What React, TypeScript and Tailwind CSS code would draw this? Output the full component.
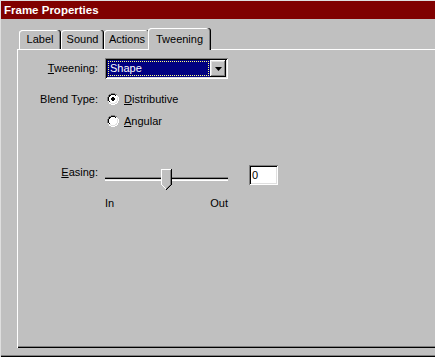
const raised =
  'shadow-[inset_-1px_-1px_#000,inset_1px_1px_#fff,inset_-2px_-2px_#808080,inset_2px_2px_#dfdfdf]';
const sunken =
  'shadow-[inset_1px_1px_#808080,inset_-1px_-1px_#fff,inset_2px_2px_#000,inset_-2px_-2px_#dfdfdf]';

function Mn({ children }: { children: string }) {
  return <span className="underline underline-offset-[1px]">{children}</span>;
}

function Radio({ checked }: { checked?: boolean }) {
  return (
    <svg width="12" height="12" viewBox="0 0 12 12" shapeRendering="crispEdges" className="shrink-0">
      <circle cx="6" cy="6" r="5.5" fill="#fff" />
      <path d="M4 0h4v1H4zM2 1h2v1H2zM8 1h2v1H8zM1 2h1v2H1zM0 4h1v4H0zM1 8h1v0H1z" fill="#808080" />
      <path d="M4 1h4v1H4zM2 2h2v1H2zM8 2h1v1H8zM2 3h1v1H2zM1 4h1v4H1zM2 8h1v1H2z" fill="#000" />
      <path d="M11 4h1v4h-1zM10 8h1v2h-1zM8 10h2v1H8zM4 11h4v1H4zM2 10h2v1H2z" fill="#fff" />
      <path d="M10 4h1v4h-1zM9 8h1v2H9zM8 9h1v1H8zM4 10h4v1H4zM3 9h1v1H3z" fill="#dfdfdf" />
      {checked && <path d="M5 4h2v1h1v2H7v1H5V7H4V5h1z" fill="#000" />}
    </svg>
  );
}

function Tab({ label, w, selected }: { label: string; w: string; selected?: boolean }) {
  return (
    <div
      className={`${w} flex items-center justify-center rounded-t-[3px] bg-[#c0c0c0] text-black ${
        selected
          ? 'relative z-10 -mx-[2px] mb-[-1px] h-[22px] shadow-[inset_-1px_0_#000,inset_-2px_0_#808080,inset_1px_1px_#fff]'
          : 'h-[19px] shadow-[inset_-1px_0_#000,inset_-2px_0_#808080,inset_1px_1px_#fff]'
      }`}
    >
      {label}
    </div>
  );
}

function SliderThumb() {
  return (
    <svg width="11" height="21" viewBox="0 0 11 21" shapeRendering="crispEdges">
      <polygon points="0,0 11,0 11,16 5.5,21 0,16" fill="#c0c0c0" />
      <path d="M0 0h10v1H0zM0 1h1v15H0zM1 16h1v1H1zM2 17h1v1H2zM3 18h1v1H3zM4 19h1v1H4z" fill="#fff" />
      <path d="M10 0h1v16h-1zM9 16h1v1H9zM8 17h1v1H8zM7 18h1v1H7zM6 19h1v1H6zM5 20h1v1H5z" fill="#000" />
      <path d="M9 1h1v15H9zM8 16h1v1H8zM7 17h1v1H7zM6 18h1v1H6zM5 19h1v1H5z" fill="#808080" />
    </svg>
  );
}

export default function App() {
  return (
    <div className="h-[357px] w-[435px] overflow-hidden bg-[#c0c0c0] font-['Liberation_Sans',Arial,sans-serif] text-[11px] leading-[13px] text-black">
      <div className="flex h-full flex-col border-l border-t border-[#dfdfdf] shadow-[inset_0_-1px_#000,inset_0_-2px_#808080]">
        <div className="flex h-[18px] items-center bg-[#800000] pl-[3px] text-[11.5px] font-bold text-white">
          Frame Properties
        </div>

        <div className="flex flex-col pl-[16px] pt-[9px]">
          <div className="flex items-end pl-[2px]">
            <Tab label="Label" w="w-[42px]" />
            <Tab label="Sound" w="w-[43px]" />
            <Tab label="Actions" w="w-[46px]" />
            <Tab label="Tweening" w="w-[63px]" selected />
          </div>

          <div className="h-[299px] border-l border-t border-white shadow-[inset_0_-1px_#000,inset_0_-2px_#808080] pt-[8px]">
            <div className="grid grid-cols-[80px_1fr] items-center gap-x-[7px]">
              <div className="text-right">
                <Mn>T</Mn>weening:
              </div>
              <div className={`flex h-[21px] w-[123px] items-center bg-white p-[2px] ${sunken}`}>
                <div className="flex h-[17px] flex-1 items-center bg-[#000080] px-[1px]">
                  <div className="flex h-[15px] w-full items-center border border-dotted border-[#ffff80] pl-[1px] text-white">
                    Shape
                  </div>
                </div>
                <div className={`flex h-[17px] w-[16px] items-center justify-center bg-[#c0c0c0] ${raised}`}>
                  <svg width="7" height="4" viewBox="0 0 7 4">
                    <path d="M0 0h7L3.5 4z" fill="#000" />
                  </svg>
                </div>
              </div>

              <div className="mt-[12px] self-center text-right">Blend Type:</div>
              <div className="mt-[12px] flex h-[16px] items-center gap-[5px] pl-[2px]">
                <Radio checked />
                <span>
                  <Mn>D</Mn>istributive
                </span>
              </div>

              <div />
              <div className="mt-[6px] flex h-[16px] items-center gap-[5px] pl-[2px]">
                <Radio />
                <span>
                  <Mn>A</Mn>ngular
                </span>
              </div>
            </div>

            <div className="mt-[36px] grid grid-cols-[80px_123px_29px] gap-x-[7px]">
              <div className="pt-[1px] text-right">
                <Mn>E</Mn>asing:
              </div>
              <div className="flex flex-col">
                <div className="relative h-[26px]">
                  <div className="absolute left-0 right-0 top-[12px] h-[4px] shadow-[inset_0_1px_#808080,inset_0_2px_#000,inset_0_-1px_#fff,inset_0_-2px_#dfdfdf]" />
                  <div className="absolute left-[56px] top-[4px]">
                    <SliderThumb />
                  </div>
                </div>
                <div className="mt-[6px] flex justify-between">
                  <span>In</span>
                  <span>Out</span>
                </div>
              </div>
              <div className={`ml-[14px] flex h-[20px] w-[29px] items-center bg-white pl-[3px] ${sunken}`}>0</div>
            </div>
          </div>
        </div>
      </div>
    </div>
  );
}
